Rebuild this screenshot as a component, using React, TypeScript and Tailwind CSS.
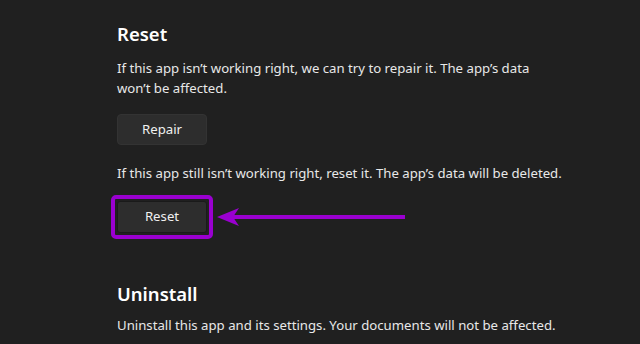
export default function App() {
  return (
    <div
      className="w-[640px] h-[344px] overflow-hidden bg-[#202020] text-white pl-[117px] pt-[20px]"
      style={{ fontFamily: '"Noto Sans", "Open Sans", sans-serif' }}
    >
      <h2 className="text-[18.5px] font-semibold leading-[28px]">Reset</h2>
      <p className="mt-[11px] w-[440px] text-[13.2px] leading-[19.5px] text-[#e8e8e8]">
        If this app isn’t working right, we can try to repair it. The app’s data won’t be affected.
      </p>
      <button className="mt-[16px] w-[90px] h-[31px] rounded-[4px] bg-[#2d2d2d] border border-[#333333] text-[13.2px] text-[#f0f0f0]">
        Repair
      </button>
      <p className="mt-[19px] text-[13.2px] leading-[19.5px] text-[#e8e8e8]">
        If this app still isn’t working right, reset it. The app’s data will be deleted.
      </p>
      <div className="mt-[11px] -ml-[6px] flex items-center">
        <div className="rounded-[5px] border-[4px] border-[#9a00d0] p-[2px]">
          <button className="w-[90px] h-[32px] rounded-[3px] bg-[#2d2d2d] border border-[#1a1a1a] text-[13.2px] text-[#f0f0f0]">
            Reset
          </button>
        </div>
        <svg width="192" height="20" viewBox="0 0 192 20" className="ml-[2px]">
          <line x1="18" y1="10" x2="190" y2="10" stroke="#9a00d0" strokeWidth="4" />
          <polygon points="2,10 24,1 18,10 24,19" fill="#9a00d0" />
        </svg>
      </div>
      <h2 className="mt-[41px] text-[18.5px] font-semibold leading-[28px]">Uninstall</h2>
      <p className="mt-[8px] text-[13.2px] leading-[19.5px] text-[#e8e8e8]">
        Uninstall this app and its settings. Your documents will not be affected.
      </p>
    </div>
  )
}
